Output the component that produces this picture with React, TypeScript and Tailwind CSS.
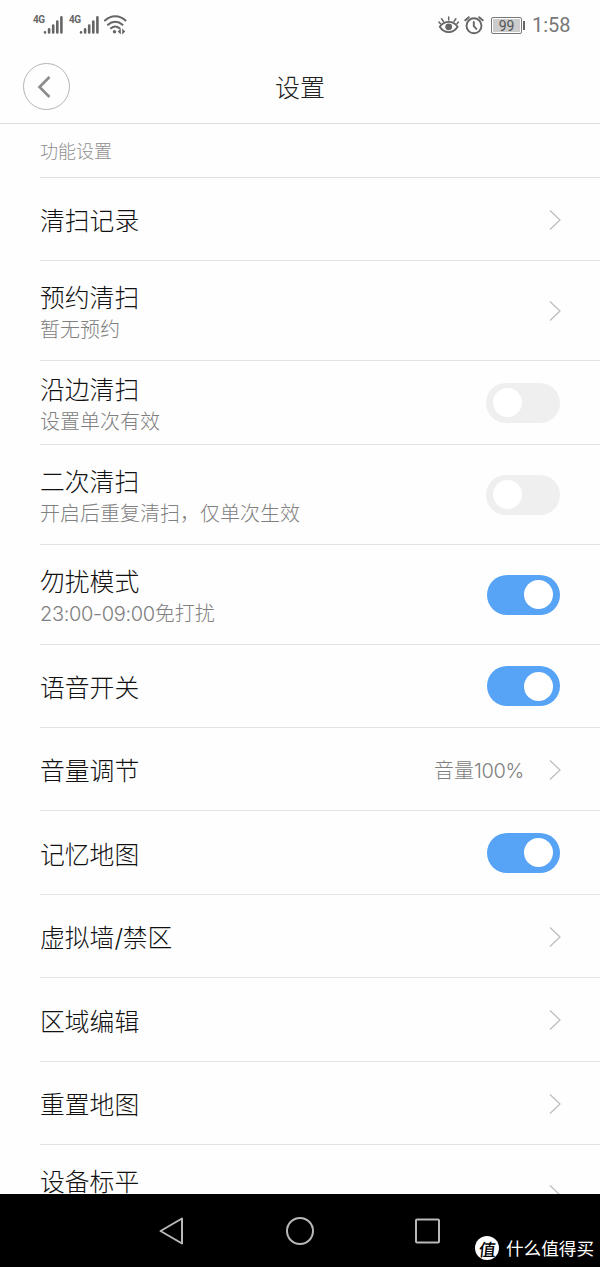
import clsx from "clsx";

interface Row {
  title: string;
  desc?: string;
  value?: string;
  type: "link" | "switch";
  on?: boolean;
  height: string;
}

const rows: Row[] = [
  { title: "清扫记录", type: "link", height: "h-[83px]" },
  { title: "预约清扫", desc: "暂无预约", type: "link", height: "h-[100px]" },
  { title: "沿边清扫", desc: "设置单次有效", type: "switch", height: "h-[84px]" },
  { title: "二次清扫", desc: "开启后重复清扫，仅单次生效", type: "switch", height: "h-[100px]" },
  { title: "勿扰模式", desc: "23:00-09:00免打扰", type: "switch", on: true, height: "h-[100px]" },
  { title: "语音开关", type: "switch", on: true, height: "h-[83px]" },
  { title: "音量调节", value: "音量100%", type: "link", height: "h-[83px]" },
  { title: "记忆地图", type: "switch", on: true, height: "h-[84px]" },
  { title: "虚拟墙/禁区", type: "link", height: "h-[83px]" },
  { title: "区域编辑", type: "link", height: "h-[84px]" },
  { title: "重置地图", type: "link", height: "h-[83px]" },
  { title: "设备标平", desc: "\u00a0", type: "link", height: "h-[100px]" },
];

// digits and latin signs are set in a lighter, wider face than the Chinese text
const Mixed = ({ text }: { text: string }) => (
  <>
    {text.split(/([0-9:%/-]+)/).map((part, i) =>
      i % 2 ? (
        <span key={i} className="font-['Inter'] leading-none font-light tracking-[-0.35px]">
          {part}
        </span>
      ) : (
        part
      )
    )}
  </>
);

const Signal = () => (
  <div className="flex w-[30px] mr-[6px]">
    <span className="font-['Roboto'] text-[10px] leading-[10px] font-bold text-[#666] w-[10px] tracking-[-0.5px]">4G</span>
    <svg width="20" height="20" viewBox="0 0 20 20" fill="none" stroke="#666" strokeWidth="2.6" strokeLinecap="round">
      <path d="M2 17.2v.2M6.100 14.2v3.200M10.200 10.500v6.900M14.300 6.500v10.900M18.400 2.400v15" />
    </svg>
  </div>
);

const StatusBar = () => (
  <div className="flex items-start justify-between h-[50px] pl-[33px] pr-[30px] pt-[15px]">
    <div className="flex">
      <Signal />
      <Signal />
      <svg className="-ml-px" width="24" height="20" viewBox="0 0 24 20" fill="none" stroke="#666" strokeWidth="2" strokeLinecap="round">
        <path d="M1 5.5C7-.3 15.500-.3 21.500 5.500M4 9.700c4.300-4 10.200-4 14.500 0M7 13.300c2.500-2.300 6-2.300 8.500 0" />
        <circle cx="10.500" cy="16.800" r="1.700" fill="#666" stroke="none" />
        <path d="M16.800 13.600v5.800l-3.100-2.900zM18.200 13.600v5.800l3.100-2.900z" fill="#666" stroke="none" />
      </svg>
    </div>
    <div className="flex items-center h-[21px]">
      <svg className="-mt-px" width="22" height="20" viewBox="0 0 22 20" fill="none" stroke="#666" strokeWidth="1.900" strokeLinecap="round">
        <path d="M1.800 11.800C6.200 5.200 15.200 5.200 19.600 11.800C15.200 18.900 6.200 18.900 1.800 11.800z" />
        <path d="M10.700 5V2M5.300 6.300L3.500 3.800M16.100 6.300L17.900 3.800M2.400 8.800L1 7M19 8.800L20.400 7" strokeWidth="1.500" />
        <circle cx="10.700" cy="11.800" r="3.400" fill="#666" stroke="none" />
      </svg>
      <svg className="ml-[4px] -mt-px" width="20" height="20" viewBox="0 0 20 20" fill="none" stroke="#666" strokeWidth="1.900" strokeLinecap="round">
        <circle cx="10" cy="10.800" r="7.500" />
        <path d="M1.300 5.300L4.800 2.200M18.700 5.300L15.200 2.200M9.800 7v4.200l2.600 2.700" />
      </svg>
      <div className="ml-[7px] w-[31px] h-[17px] rounded-[2px] border border-[#777] p-px">
        <div className="h-full bg-[#ccc] text-center font-['Roboto'] text-[14px] leading-[14px] font-normal text-[#555]">99</div>
      </div>
      <div className="ml-px w-[2px] h-[9px] bg-[#666]" />
      <span className="ml-[7px] w-[38px] whitespace-nowrap font-['Roboto'] text-[20px] leading-[21px] font-normal text-[#777]">1:58</span>
    </div>
  </div>
);

const Header = () => (
  <div className="grid grid-cols-[47px_1fr_47px] items-center h-[74px] px-[23px] border-b border-[#dcdcdc]">
    <button className="flex items-center justify-center w-[47px] h-[47px] rounded-full border border-[#b5b5b5]">
      <svg className="mr-[3px]" width="16" height="24" viewBox="0 0 16 24" fill="none" stroke="#8c8c8c" strokeWidth="2.600">
        <path d="M12.500 2L2.500 12l10 10" />
      </svg>
    </button>
    <div className="text-center text-[25px] text-[#222]">设置</div>
  </div>
);

const Switch = ({ on }: { on?: boolean }) => (
  <button
    className={clsx(
      "flex items-center h-[40px] rounded-full",
      on ? "w-[73px] justify-end bg-[#57a3f5] pr-[7px]" : "w-[74px] bg-[#efefef] pl-[7px]"
    )}
  >
    <span className="w-[29px] h-[29px] rounded-full bg-white" />
  </button>
);

const Chevron = () => (
  <svg className="-mr-px mt-px" width="12" height="22" viewBox="0 0 12 22" fill="none" stroke="#bcbcbc" strokeWidth="1.200">
    <path d="M1 1.500L11 11L1 20.500" />
  </svg>
);

const SettingRow = ({ row }: { row: Row }) => (
  <div className={clsx("flex shrink-0 items-center ml-10 pr-10 border-b border-[#e3e3e3]", row.height)}>
    <div className={clsx("flex-1", row.desc && "pt-[3px]")}>
      <div className="text-[24.800px] leading-8 text-[#111]">
        <Mixed text={row.title} />
      </div>
      {row.desc && (
        <div className="mt-[2px] text-[20px] leading-[30px] text-[#808080]">
          <Mixed text={row.desc} />
        </div>
      )}
    </div>
    {row.value && (
      <div className="mr-[25px] pt-[2px] text-[20px] text-[#808080]">
        <Mixed text={row.value} />
      </div>
    )}
    {row.type === "switch" ? <Switch on={row.on} /> : <Chevron />}
  </div>
);

const NavBar = () => (
  <div className="relative flex items-center h-[73px] bg-black">
    <svg className="ml-[158px]" width="28" height="30" viewBox="0 0 28 30" fill="none" stroke="#b8b8b8" strokeWidth="2" strokeLinejoin="round">
      <path d="M24 2.500v25L2.500 15z" />
    </svg>
    <svg className="ml-[99px]" width="30" height="30" viewBox="0 0 30 30" fill="none" stroke="#b8b8b8" strokeWidth="2">
      <circle cx="15" cy="15" r="13" />
    </svg>
    <svg className="ml-[97px]" width="30" height="30" viewBox="0 0 30 30" fill="none" stroke="#b8b8b8" strokeWidth="2">
      <rect x="4" y="3.500" width="23" height="23" rx="1" />
    </svg>
    <div className="absolute left-[475px] top-[42px] flex items-center text-white">
      <span className="flex items-center justify-center w-[24px] h-[24px] rounded-full bg-white text-black text-[17px] leading-none font-medium">
        <span className="-skew-x-6">值</span>
      </span>
      <span className="ml-[7px] whitespace-nowrap text-[17.600px] leading-[24px] font-normal">什么值得买</span>
    </div>
  </div>
);

const App = () => {
  return (
    <div className="flex flex-col w-[600px] h-[1267px] overflow-hidden bg-[#fefefe] font-['Noto_Sans_CJK_SC',sans-serif] font-light">
      <StatusBar />
      <Header />
      <div className="flex flex-col flex-1 min-h-0 overflow-hidden">
        <div className="flex shrink-0 items-center h-[54px] ml-10 border-b border-[#e0e0e0] text-[18px] text-[#909090]">
          功能设置
        </div>
        {rows.map((row) => (
          <SettingRow key={row.title} row={row} />
        ))}
      </div>
      <NavBar />
    </div>
  );
};

export default App;
